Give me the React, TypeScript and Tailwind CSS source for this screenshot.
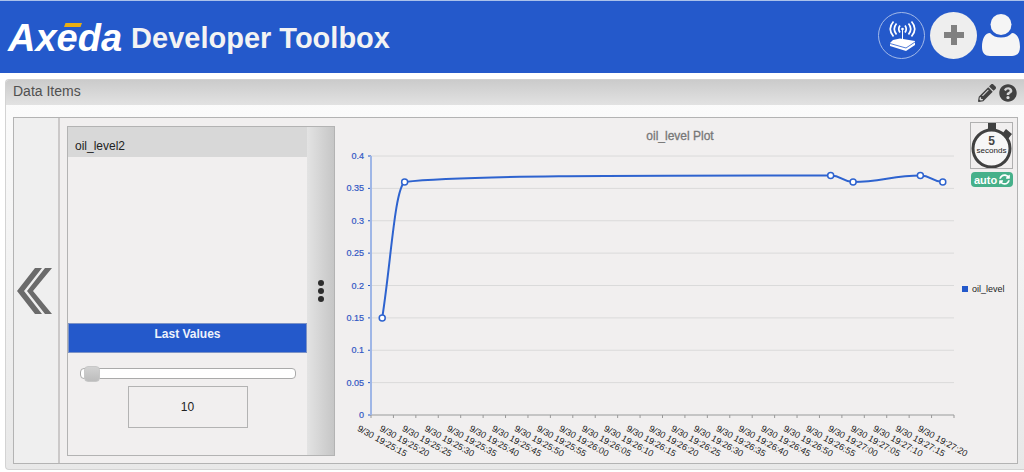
import { useState } from 'react';
import { FaPencilAlt, FaQuestionCircle, FaSyncAlt } from 'react-icons/fa';

interface DataPoint {
  seconds: number;
  value: number;
}

// Seconds are counted from the first label, 19:25:15
const points: DataPoint[] = [
  { seconds: 0, value: 0.15 },
  { seconds: 5, value: 0.36 },
  { seconds: 100, value: 0.37 },
  { seconds: 105, value: 0.36 },
  { seconds: 120, value: 0.37 },
  { seconds: 125, value: 0.36 }
];

const yTicks = [0, 0.05, 0.1, 0.15, 0.2, 0.25, 0.3, 0.35, 0.4];

const PLOT = { left: 36, right: 619, top: 38, bottom: 297 };
const SLOTS = 26;
const slotWidth = (PLOT.right - PLOT.left) / SLOTS;

const xFor = (seconds: number) => PLOT.left + slotWidth * (seconds / 5 + 0.5);
const yFor = (value: number) => PLOT.bottom - (value / 0.4) * (PLOT.bottom - PLOT.top);

const timeLabel = (index: number) => {
  const total = 25 * 60 + 15 + index * 5;
  const minutes = Math.floor(total / 60);
  const seconds = String(total % 60).padStart(2, '0');
  return `9/30 19:${minutes}:${seconds}`;
};

// Smooth line through the points, flat at each local peak
const buildPath = () => {
  const p = points.map(d => ({ x: xFor(d.seconds), y: yFor(d.value) }));
  return [
    `M${p[0].x} ${p[0].y}`,
    `C${p[0].x + 9} ${p[0].y - 58} ${p[1].x - 10} ${p[1].y + 8} ${p[1].x} ${p[1].y}`,
    `C${p[1].x + 62} ${p[1].y - 7} ${p[2].x - 180} ${p[2].y} ${p[2].x} ${p[2].y}`,
    `C${p[2].x + 11} ${p[2].y} ${p[3].x - 11} ${p[3].y} ${p[3].x} ${p[3].y}`,
    `C${p[3].x + 27} ${p[3].y} ${p[4].x - 27} ${p[4].y} ${p[4].x} ${p[4].y}`,
    `C${p[4].x + 11} ${p[4].y} ${p[5].x - 11} ${p[5].y} ${p[5].x} ${p[5].y}`
  ].join(' ');
};

function AxedaLogo() {
  return (
    <span className="relative text-[38px] leading-10 font-bold italic text-white">
      Axeda
      <svg viewBox="0 0 18 4" className="absolute top-[5px] left-[56px] h-1 w-[18px]" aria-hidden="true">
        <path d="M1.500 0H18L16.500 4H0z" fill="#e9ae12" />
      </svg>
    </span>
  );
}

function RouterIcon() {
  return (
    <svg viewBox="0 0 47 47" className="size-[47px] shrink-0" fill="none" aria-hidden="true">
      <g stroke="#fff" strokeWidth="1.7">
        <path d="M22 13.500q-2.500 3.500 0 7M18.500 11.500q-4.500 5.500 0 11M15.500 9.500q-6.500 7.500 0 15" />
        <path d="M27 13.500q2.500 3.500 0 7M30.500 11.500q4.500 5.500 0 11M33.500 9.500q6.500 7.500 0 15" />
        <path d="M24.500 18v10" strokeWidth="1" />
      </g>
      <circle cx="24.500" cy="17" r="1.300" fill="#fff" />
      <path d="M15 28l7-1.500L37 29v4l-9 6-16-5v-3z" fill="#fff" />
      <path d="M12 31.500l16 4.500 9-6" stroke="#2459cb" strokeWidth="0.800" />
    </svg>
  );
}

function Header() {
  return (
    <header className="flex h-[73px] items-center justify-between border-t border-[#aac1ea] bg-[#2459cb] pr-1 pl-2">
      <h1 className="flex items-center gap-[9px] pt-px">
        <AxedaLogo />
        <span className="text-[29px] leading-10 font-bold text-[#f3f3f3]">Developer Toolbox</span>
      </h1>
      <div className="flex items-center gap-[5px] pb-1">
        <button type="button" aria-label="Devices" className="flex size-[47px] items-center justify-center rounded-full border border-[#a3b9e8]">
          <RouterIcon />
        </button>
        <button type="button" aria-label="Add" className="flex size-[47px] items-center justify-center rounded-full bg-[#eee]">
          <svg viewBox="0 0 20 20" className="size-5" aria-hidden="true">
            <path d="M7 0h6v7h7v6h-7v7H7v-7H0V7h7z" fill="#808080" />
          </svg>
        </button>
        <button type="button" aria-label="Account">
          <svg viewBox="0 0 38 42" className="h-[42px] w-[38px]" fill="#f5f5f5" aria-hidden="true">
            <circle cx="19" cy="10.500" r="10.500" />
            <path d="M8 19c3 3 6 4.500 11 4.500S27 22 30 19c5 0 8 6 8 14 0 6-3 9-8 9H8c-5 0-8-3-8-9 0-8 3-14 8-14z" />
          </svg>
        </button>
      </div>
    </header>
  );
}

function ItemPanel() {
  const [count, setCount] = useState(10);

  return (
    <section className="flex w-[268px] border border-[#b3b3b3]">
      <div className="flex flex-1 flex-col">
        <ul className="h-[196px] text-xs text-[#222]">
          <li className="flex h-[30px] items-center bg-[#d8d8d8] px-[7px] pt-2">oil_level2</li>
        </ul>
        <h3 className="h-[30px] border border-[#7d93c6] bg-[#2459cb] text-center text-xs leading-5 font-bold text-[#eef2fb]">
          Last Values
        </h3>
        <div className="flex flex-col items-center pt-3">
          <input
            type="range"
            min={1}
            max={500}
            value={count}
            onChange={e => setCount(Number(e.target.value))}
            aria-label="Number of last values"
            className="h-4 w-[216px] appearance-none bg-transparent [&::-webkit-slider-runnable-track]:h-[11px] [&::-webkit-slider-runnable-track]:rounded [&::-webkit-slider-runnable-track]:border [&::-webkit-slider-runnable-track]:border-[#aaa] [&::-webkit-slider-runnable-track]:bg-white [&::-webkit-slider-thumb]:-mt-[3px] [&::-webkit-slider-thumb]:size-4 [&::-webkit-slider-thumb]:appearance-none [&::-webkit-slider-thumb]:rounded-sm [&::-webkit-slider-thumb]:border [&::-webkit-slider-thumb]:border-[#c8c8c8] [&::-webkit-slider-thumb]:bg-linear-to-b [&::-webkit-slider-thumb]:from-[#d2d2d2] [&::-webkit-slider-thumb]:to-[#bdbdbd]"
          />
          <input
            type="text"
            value={count}
            onChange={e => setCount(Number(e.target.value) || 0)}
            aria-label="Last values count"
            className="mt-[5px] h-[42px] w-[120px] border border-[#b3b3b3] text-center text-xs text-[#222]"
          />
        </div>
      </div>
      <button
        type="button"
        aria-label="More"
        className="flex w-[27px] flex-col items-center justify-center gap-[2px] bg-linear-to-r from-[#e3e3e3] to-[#c6c6c6]"
      >
        <span className="size-[6px] rounded-full bg-[#2c2c2c]" />
        <span className="size-[6px] rounded-full bg-[#2c2c2c]" />
        <span className="size-[6px] rounded-full bg-[#2c2c2c]" />
      </button>
    </section>
  );
}

function LevelChart() {
  return (
    <svg viewBox="0 0 627 345" className="w-full overflow-visible" role="img" aria-label="oil_level Plot">
      <text x="345" y="22" textAnchor="middle" fontSize="12" fill="#777" stroke="#777" strokeWidth="0.3">
        oil_level Plot
      </text>
      {yTicks.map(tick => (
        <g key={tick}>
          <line x1={PLOT.left} x2={PLOT.right} y1={yFor(tick)} y2={yFor(tick)} stroke="#dadada" />
          <line x1={PLOT.left - 3} x2={PLOT.left} y1={yFor(tick)} y2={yFor(tick)} stroke="#2459cb" />
          <text x="29" y={yFor(tick) + 3} textAnchor="end" fontSize="9" fill="#3157c4" stroke="#3157c4" strokeWidth="0.2">
            {tick}
          </text>
        </g>
      ))}
      <line x1={PLOT.left} x2={PLOT.right} y1={PLOT.bottom} y2={PLOT.bottom} stroke="#a5a5a5" />
      {Array.from({ length: SLOTS + 1 }, (_, i) => (
        <line
          key={i}
          x1={PLOT.left + i * slotWidth}
          x2={PLOT.left + i * slotWidth}
          y1={PLOT.bottom}
          y2={PLOT.bottom + 3}
          stroke="#999"
        />
      ))}
      <line x1={PLOT.left} x2={PLOT.left} y1={PLOT.top} y2={PLOT.bottom} stroke="#9fb6e6" strokeWidth="2" />
      {Array.from({ length: SLOTS }, (_, i) => {
        const x = xFor(i * 5);
        return (
          <text
            key={i}
            x={x}
            y="326"
            textAnchor="middle"
            fontSize="9"
            fill="#222"
            transform={`rotate(29 ${x} 323)`}
          >
            {timeLabel(i)}
          </text>
        );
      })}
      <path d={buildPath()} fill="none" stroke="#2e63cf" strokeWidth="2" />
      {points.map(d => (
        <circle key={d.seconds} cx={xFor(d.seconds)} cy={yFor(d.value)} r="3" fill="#fff" stroke="#2e63cf" strokeWidth="1.500" />
      ))}
    </svg>
  );
}

function RefreshControls() {
  return (
    <div className="flex w-[55px] flex-col items-end pr-1">
      <button type="button" className="relative mt-1 flex h-[47px] w-[43px] flex-col items-center border border-[#b0b0b0] pt-3">
        <svg viewBox="0 0 41 45" className="absolute inset-0 size-full" fill="none" aria-hidden="true">
          <path d="M17 0h8v8h-8zM31 11l4-5 6 5-4 5z" fill="#404040" />
          <circle cx="20.500" cy="25.500" r="18.500" fill="#f6f6f6" stroke="#404040" strokeWidth="3" />
        </svg>
        <span className="relative text-xs leading-3 font-bold text-[#444]">5</span>
        <span className="relative text-[8px] leading-2 text-[#222]">seconds</span>
      </button>
      <button
        type="button"
        className="mt-[3px] flex h-[15px] w-[42px] items-center justify-center gap-[2px] rounded-sm bg-[#46b08a] text-[11px] leading-3 font-bold text-white"
      >
        auto
        <FaSyncAlt className="size-[11px]" aria-hidden="true" />
      </button>
      <div className="mt-24 flex w-full items-center gap-1 text-[9px] leading-3 text-[#222]">
        <span className="size-[6px] bg-[#2459cb]" />
        oil_level
      </div>
    </div>
  );
}

export default function App() {
  return (
    <div className="bg-white font-['Liberation_Sans',Arial,sans-serif]">
      <Header />
      <main className="mt-[6px] ml-[5px] overflow-hidden rounded-l border border-r-0 border-[#d3d3d3] bg-linear-to-b from-[#fcfcfc] to-[#e8e8e8]">
        <div className="flex h-[25px] items-start justify-between bg-linear-to-b from-[#cbcbcb] to-[#e2e2e2] px-[7px]">
          <h2 className="text-sm leading-[22px] text-[#505050]">Data Items</h2>
          <div className="flex items-center gap-[3px] pt-1 text-[#424242]">
            <button type="button" aria-label="Edit">
              <FaPencilAlt className="size-[18px]" />
            </button>
            <button type="button" aria-label="Help">
              <FaQuestionCircle className="size-[18px]" />
            </button>
          </div>
        </div>
        <div className="mt-3 mr-[6px] mb-[5px] ml-[7px] flex border border-[#b3b3b3] bg-[#f1efef]">
          <button
            type="button"
            aria-label="Previous"
            className="flex w-[46px] items-center border-r-2 border-[#cbc9c9] bg-[#efefef] pl-[3px]"
          >
            <svg viewBox="0 0 35 46" className="h-[46px] w-[35px]" fill="#6b6b6b" aria-hidden="true">
              <path d="M18 0h7L7 23l18 23h-7L0 23zM28 0h7L16 23l19 23h-7L10 23z" />
            </svg>
          </button>
          <div className="flex min-w-0 flex-1 pl-[7px]">
            <div className="flex pt-2 pb-[7px]">
              <ItemPanel />
            </div>
            <div className="min-w-0 flex-1">
              <LevelChart />
            </div>
            <RefreshControls />
          </div>
        </div>
      </main>
    </div>
  );
}
